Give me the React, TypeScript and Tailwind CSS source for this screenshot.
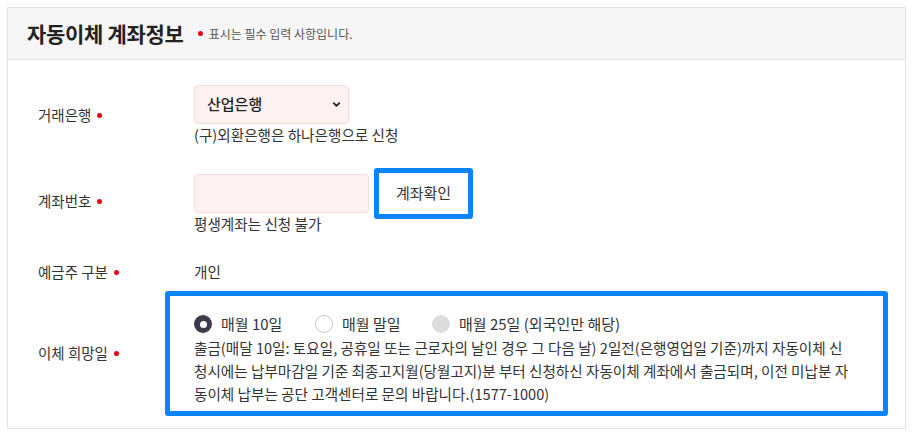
import { ChevronDown } from "lucide-react";

const FONT = "font-['Noto_Sans_CJK_KR','Noto_Sans',sans-serif]";

function Dot() {
  return <span className="ml-1.5 inline-block size-[5px] rounded-full bg-[#e60012] align-middle" />;
}

function Label({ children }: { children: React.ReactNode }) {
  return (
    <div className="flex w-[156px] shrink-0 items-center text-[14.5px] text-[#333]">
      {children}
      <Dot />
    </div>
  );
}

function Radio({ state, label }: { state: "on" | "off" | "disabled"; label: string }) {
  return (
    <label className="flex items-center gap-[9px] text-[15px] text-[#333]">
      {state === "on" ? (
        <span className="flex size-[18px] items-center justify-center rounded-full bg-[#3b3b4d]">
          <span className="size-[7px] rounded-full bg-white" />
        </span>
      ) : state === "off" ? (
        <span className="size-[18px] rounded-full border border-[#c8c8c8] bg-white" />
      ) : (
        <span className="size-[18px] rounded-full bg-[#dcdcdc]" />
      )}
      {label}
    </label>
  );
}

export default function App() {
  return (
    <div className={`${FONT} h-[436px] w-[913px] bg-white pl-[7px] pt-[7px]`}>
      <div className="w-[899px] border border-[#e2e2e2]">
        <div className="flex h-[52px] items-center border-b border-[#e2e2e2] bg-[#f6f6f6] pl-[19px]">
          <h2 className="text-[21px] font-bold tracking-[-0.3px] text-[#222]">자동이체 계좌정보</h2>
          <span className="ml-[14px] size-[5px] rounded-full bg-[#e60012]" />
          <span className="ml-[6px] text-[12px] text-[#555]">표시는 필수 입력 사항입니다.</span>
        </div>

        <div className="flex flex-col pb-[12px] pl-[30px] pr-[16px] pt-[25px]">
          <div className="flex items-center">
            <Label>거래은행</Label>
            <div className="flex flex-col">
              <div className="relative w-[155px]">
                <select className="h-[39px] w-full appearance-none rounded-[4px] border border-[#fcd9d9] bg-[#fff1f1] pl-[12px] text-[15px] font-medium text-[#222] outline-none">
                  <option>산업은행</option>
                </select>
                <ChevronDown
                  className="pointer-events-none absolute right-[7px] top-[14px] size-[11px] text-[#222]"
                  strokeWidth={4}
                />
              </div>
              <p className="text-[14.6px] leading-[21px] text-[#333]">(구)외환은행은 하나은행으로 신청</p>
            </div>
          </div>

          <div className="mt-[23px] flex items-center">
            <Label>계좌번호</Label>
            <div className="flex flex-col">
              <div className="flex items-center gap-[5px]">
                <input className="h-[39px] w-[175px] rounded-[4px] border border-[#fcd9d9] bg-[#fff1f1] outline-none" />
                <button className="h-[51px] w-[99px] rounded-[3px] border-[5px] border-[#0a84ff] bg-white text-[15px] text-[#333]">
                  계좌확인
                </button>
              </div>
              <p className="-mt-[6px] text-[14.6px] leading-[21px] text-[#333]">평생계좌는 신청 불가</p>
            </div>
          </div>

          <div className="mt-[27px] flex items-center">
            <Label>예금주 구분</Label>
            <span className="text-[14.6px] leading-[22px] text-[#333]">개인</span>
          </div>

          <div className="mt-[8px] flex items-center">
            <Label>이체 희망일</Label>
            <div className="-ml-[29px] flex w-[723px] flex-col rounded-[3px] border-[5px] border-[#0a84ff] pb-[6px] pl-[24px] pr-[34px] pt-[17px]">
              <div className="flex items-center">
                <div className="w-[121px]">
                  <Radio state="on" label="매월 10일" />
                </div>
                <div className="w-[117px]">
                  <Radio state="off" label="매월 말일" />
                </div>
                <Radio state="disabled" label="매월 25일 (외국인만 해당)" />
              </div>
              <p className="text-[14.6px] leading-[23px] text-[#333]">
                출금(매달 10일: 토요일, 공휴일 또는 근로자의 날인 경우 그 다음 날) 2일전(은행영업일 기준)까지 자동이체 신청시에는 납부마감일 기준 최종고지월(당월고지)분 부터 신청하신 자동이체 계좌에서 출금되며, 이전 미납분 자동이체 납부는 공단 고객센터로 문의 바랍니다.(1577-1000)
              </p>
            </div>
          </div>
        </div>
      </div>
    </div>
  );
}
